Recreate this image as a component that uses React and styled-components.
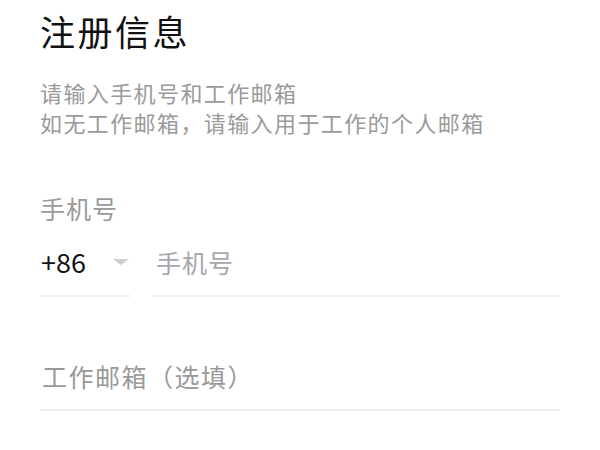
import React, { useState } from 'react';
import styled, { createGlobalStyle } from 'styled-components';

const GlobalStyle = createGlobalStyle`
  html, body {
    margin: 0;
    padding: 0;
    background: #fff;
  }
  body {
    font-family: "Noto Sans CJK SC", "Noto Sans", sans-serif;
  }
`;

const Page = styled.div`
  padding: 13px 40px 0;
  display: flex;
  flex-direction: column;
`;

const Title = styled.h1`
  margin: 0;
  font-size: 35px;
  line-height: 36px;
  font-weight: 400;
  letter-spacing: 2.5px;
  color: #111;
`;

const Hint = styled.p`
  margin: 28px 0 0;
  font-size: 22px;
  line-height: 30px;
  letter-spacing: 1.4px;
  color: #9a9a9a;
`;

const Label = styled.div`
  margin-top: 56px;
  font-size: 25px;
  line-height: 30px;
  letter-spacing: 1px;
  color: #9a9a9a;
`;

const Row = styled.div`
  display: flex;
  gap: 22px;
  margin-top: ${({ $gap }) => $gap}px;
`;

const Field = styled.div`
  display: flex;
  align-items: center;
  justify-content: space-between;
  padding: 10px 0 18px;
  border-bottom: 2px solid #eeeeee;
  flex: ${({ $grow }) => ($grow ? 1 : 'none')};
  width: ${({ $width }) => ($width ? `${$width}px` : 'auto')};
`;

const Code = styled.span`
  font-size: 27px;
  line-height: 30px;
  color: #111;
  padding-left: 1px;
`;

const Caret = styled.span`
  width: 0;
  height: 0;
  margin-right: 1px;
  border-left: 8px solid transparent;
  border-right: 8px solid transparent;
  border-top: 6px solid #cfcfcf;
`;

const Input = styled.input`
  flex: 1;
  min-width: 0;
  border: none;
  outline: none;
  padding: 0 0 0 ${({ $indent }) => $indent}px;
  margin: 0;
  background: transparent;
  font-family: inherit;
  font-size: 25px;
  line-height: 30px;
  height: 30px;
  letter-spacing: ${({ $spacing }) => $spacing}px;
  color: #111;
  &::placeholder {
    color: ${({ $hintColor }) => $hintColor};
  }
`;

function App() {
  const [phone, setPhone] = useState('');
  const [email, setEmail] = useState('');

  return (
    <Page>
      <GlobalStyle />
      <Title>注册信息</Title>
      <Hint>
        请输入手机号和工作邮箱
        <br />
        如无工作邮箱，请输入用于工作的个人邮箱
      </Hint>
      <Label>手机号</Label>
      <Row $gap={14}>
        <Field $width={90}>
          <Code>+86</Code>
          <Caret />
        </Field>
        <Field $grow>
          <Input
            $indent={4}
            $spacing={1}
            $hintColor="#a4a8ae"
            placeholder="手机号"
            value={phone}
            onChange={(e) => setPhone(e.target.value)}
          />
        </Field>
      </Row>
      <Row $gap={54}>
        <Field $grow>
          <Input
            $indent={2}
            $spacing={1.5}
            $hintColor="#999999"
            placeholder="工作邮箱（选填）"
            value={email}
            onChange={(e) => setEmail(e.target.value)}
          />
        </Field>
      </Row>
    </Page>
  );
}

export default App;
